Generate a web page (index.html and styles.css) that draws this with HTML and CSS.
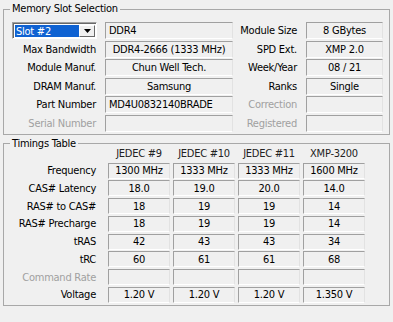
FILE: index.html
```html
<!DOCTYPE html>
<html lang="en">
<head>
    <meta charset="UTF-8" />
    <meta name="viewport" content="width=device-width, initial-scale=1.0" />
    <title>SPD</title>
    <link rel="stylesheet" href="styles.css">
</head>
<body>
    <!-- Memory slot selection -->
    <fieldset class="group slot-group">
        <legend>Memory Slot Selection</legend>
        <div class="slot-grid">
            <div class="combo">
                <span class="combo-value">Slot #2</span>
                <span class="combo-btn">
                    <svg width="7" height="4" viewBox="0 0 7 4"><path d="M0 0h7L3.5 4z" fill="#000"/></svg>
                </span>
            </div>
            <div class="field left">DDR4</div>
            <div class="label">Module Size</div>
            <div class="field">8 GBytes</div>

            <div class="label">Max Bandwidth</div>
            <div class="field">DDR4-2666 (1333 MHz)</div>
            <div class="label">SPD Ext.</div>
            <div class="field">XMP 2.0</div>

            <div class="label">Module Manuf.</div>
            <div class="field">Chun Well Tech.</div>
            <div class="label">Week/Year</div>
            <div class="field">08 / 21</div>

            <div class="label">DRAM Manuf.</div>
            <div class="field">Samsung</div>
            <div class="label">Ranks</div>
            <div class="field">Single</div>

            <div class="label">Part Number</div>
            <div class="field left">MD4U0832140BRADE</div>
            <div class="label off">Correction</div>
            <div class="field"></div>

            <div class="label off">Serial Number</div>
            <div class="field"></div>
            <div class="label off">Registered</div>
            <div class="field"></div>
        </div>
    </fieldset>

    <!-- Timings table -->
    <fieldset class="group timing-group">
        <legend>Timings Table</legend>
        <div class="timing-grid">
            <div></div>
            <div class="head">JEDEC #9</div>
            <div class="head">JEDEC #10</div>
            <div class="head">JEDEC #11</div>
            <div class="head">XMP-3200</div>

            <div class="label">Frequency</div>
            <div class="field">1300 MHz</div>
            <div class="field">1333 MHz</div>
            <div class="field">1333 MHz</div>
            <div class="field">1600 MHz</div>

            <div class="label">CAS# Latency</div>
            <div class="field">18.0</div>
            <div class="field">19.0</div>
            <div class="field">20.0</div>
            <div class="field">14.0</div>

            <div class="label">RAS# to CAS#</div>
            <div class="field">18</div>
            <div class="field">19</div>
            <div class="field">19</div>
            <div class="field">14</div>

            <div class="label">RAS# Precharge</div>
            <div class="field">18</div>
            <div class="field">19</div>
            <div class="field">19</div>
            <div class="field">14</div>

            <div class="label">tRAS</div>
            <div class="field">42</div>
            <div class="field">43</div>
            <div class="field">43</div>
            <div class="field">34</div>

            <div class="label">tRC</div>
            <div class="field">60</div>
            <div class="field">61</div>
            <div class="field">61</div>
            <div class="field">68</div>

            <div class="label off">Command Rate</div>
            <div class="field"></div>
            <div class="field"></div>
            <div class="field"></div>
            <div class="field"></div>

            <div class="label">Voltage</div>
            <div class="field">1.20 V</div>
            <div class="field">1.20 V</div>
            <div class="field">1.20 V</div>
            <div class="field">1.350 V</div>
        </div>
    </fieldset>
</body>
</html>
```

FILE: styles.css
```css
* {
    box-sizing: border-box;
}

body {
    margin: 0;
    width: 393px;
    height: 322px;
    overflow: hidden;
    background-color: #f0f0f0;
    font-family: "DejaVu Sans Condensed", "Liberation Sans", sans-serif;
    font-size: 11px;
    letter-spacing: -0.25px;
    color: #000;
}

/* Group boxes */
.group {
    margin: 0 3px;
    padding: 0 0 2px 0;
    border: 1px solid #a8a8a8;
    min-width: 0;
}
.slot-group {
    margin-top: 2px;
}
.timing-group {
    margin-top: 2px;
}
.group legend {
    margin-left: 6px;
    padding: 0 2px;
    line-height: 14px;
}

/* Sunken value boxes */
.field {
    border: 1px solid;
    border-color: #a0a0a0 #e2e2e2 #fff #a0a0a0;
    text-align: center;
    white-space: nowrap;
    overflow: hidden;
    display: flex;
    align-items: center;
    justify-content: center;
}
.field.left {
    justify-content: flex-start;
    padding-left: 3px;
}

.label {
    text-align: right;
    padding-right: 9px;
    white-space: nowrap;
    display: flex;
    align-items: center;
    justify-content: flex-end;
}
.label.off {
    color: #a0a0a0;
}

/* Slot grid */
.slot-grid {
    display: grid;
    grid-template-columns: 101px 128px 73px 77px;
    grid-auto-rows: 17px;
    row-gap: 1.6px;
    padding-top: 6px;
}

/* Combo box */
.combo {
    margin-left: 8px;
    width: 85px;
    display: flex;
    border: 1px solid;
    border-color: #a0a0a0 #fff #fff #a0a0a0;
    background-color: #fff;
    box-shadow: inset 1px 1px 0 #696969;
    padding: 2px 1px 1px 2px;
}
.combo-value {
    flex: 1;
    background-color: #0f62d2;
    color: #fff;
    padding-left: 1px;
    line-height: 13px;
}
.combo-btn {
    width: 16px;
    border: 1px solid;
    border-color: #fff #696969 #696969 #fff;
    background-color: #f0f0f0;
    display: flex;
    align-items: center;
    justify-content: center;
}

/* Timings grid: header row tucks up beside the legend */
.timing-grid {
    display: grid;
    grid-template-columns: 101px 62px 62px 62px 62px;
    column-gap: 3px;
    grid-template-rows: 15px;
    grid-auto-rows: 16px;
    row-gap: 1.75px;
    margin-top: -5px;
}
.timing-grid .label {
    padding-right: 9px;
}
.head {
    display: flex;
    align-items: center;
    justify-content: center;
    color: #222;
}
```
